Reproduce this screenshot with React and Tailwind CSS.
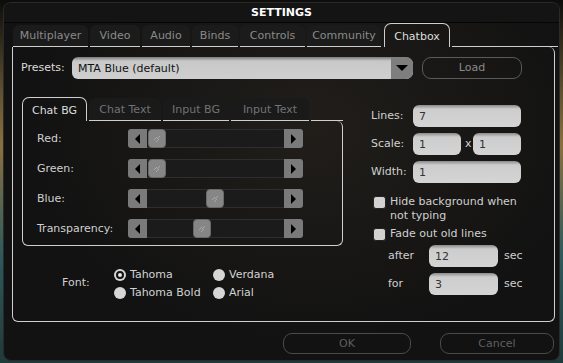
import React from "react";

const tabs = [
  ["Multiplayer", 75],
  ["Video", 50],
  ["Audio", 48],
  ["Binds", 46],
  ["Controls", 65],
  ["Community", 74],
];

const subTabs = [
  ["Chat Text", 72],
  ["Input BG", 66],
  ["Input Text", 78],
];

const sliders = [
  ["Red:", 1],
  ["Green:", 1],
  ["Blue:", 59],
  ["Transparency:", 46],
];

function Slider({ pos }) {
  return (
    <div className="relative flex h-[19px] w-[175px] items-stretch">
      <div className="flex w-[19px] items-center justify-center rounded-l-[3px] bg-[#7a7a7a]">
        <div className="h-0 w-0 border-y-[5px] border-r-[5px] border-y-transparent border-r-black" />
      </div>
      <div className="flex-1 border-y border-[#2e2e2e] bg-[#1b1b1b]" />
      <div className="flex w-[19px] items-center justify-center rounded-r-[3px] bg-[#7a7a7a]">
        <div className="h-0 w-0 border-y-[5px] border-l-[5px] border-y-transparent border-l-black" />
      </div>
      <div
        className="absolute top-[0px] flex h-[19px] w-[18px] items-center justify-center rounded-[4px] border border-[#6a6a6a] bg-[#868686]"
        style={{ left: 19 + pos }}
      >
        <svg width="9" height="9" viewBox="0 0 9 9">
          <path d="M1 6 L4 3 M3 8 L6 5 M4 5 L7 2" stroke="#a8a8a8" strokeWidth="1" />
        </svg>
      </div>
    </div>
  );
}

function Input({ value, w }) {
  return (
    <div
      className={`flex h-[22px] items-end rounded-[6px] bg-[linear-gradient(#8a8a8a,#cdcdcd_4px,#d4d4d4)] pb-[3px] pl-[6px] text-[#333] ${w}`}
    >
      {value}
    </div>
  );
}

function Radio({ checked, label }) {
  return (
    <div className="flex h-[18px] items-center gap-[4px]">
      <div className="flex h-[12px] w-[12px] items-center justify-center rounded-full bg-[#d6d6d6]">
        {checked && <div className="h-[8px] w-[8px] rounded-full border-2 border-[#111] bg-[#e8e8e8]" />}
      </div>
      <span className="text-[#d2d2d2]">{label}</span>
    </div>
  );
}

function Checkbox() {
  return <div className="mt-[1px] h-[13px] w-[13px] shrink-0 rounded-[3px] border border-[#222] bg-[#d2d2d2]" />;
}

export default function App() {
  return (
    <div className="h-[363px] w-[563px] overflow-hidden bg-[linear-gradient(180deg,#0c0c0a,#5e5030_25%,#8a7040_40%,#2f5a5c_70%,#1f3a3a)] pl-[3px] pt-[2px] font-['DejaVu_Sans',sans-serif] text-[11px] leading-[14px]">
      <div className="flex h-[359px] w-[557px] flex-col rounded-[8px] border border-[#2a2a2a] bg-[radial-gradient(ellipse_at_55%_35%,#211e1a,#121212_65%)]">
        {/* title */}
        <div className="flex h-[20px] items-center justify-center rounded-t-[8px] border-b border-[#050505] bg-[#141414] pt-[1px] text-[11px] font-bold text-white">
          SETTINGS
        </div>
        {/* tabs */}
        <div className="flex h-[24px] items-end gap-[2px] pl-[9px]">
          {tabs.map(([t, w]) => (
            <div
              key={t}
              className="flex h-[22px] items-center justify-center rounded-t-[6px] border-b border-[#cfcfcf] bg-[#1b1b1b] pt-[1px] text-[#8a8a8a]"
              style={{ width: w }}
            >
              {t}
            </div>
          ))}
          <div className="ml-[1px] flex h-[24px] w-[66px] items-center justify-center rounded-t-[7px] border border-b-0 border-[#cfcfcf] pt-[3px] text-[#dedede]">
            Chatbox
          </div>
          <div className="h-[24px] flex-1">
            <div className="mt-[23px] h-[1px] w-[106px] bg-[#cfcfcf]" />
          </div>
        </div>
        {/* main panel */}
        <div className="ml-[8px] flex h-[275px] w-[543px] flex-col rounded-b-[6px] rounded-tr-[6px] border border-t-0 border-[#cfcfcf]">
          {/* presets */}
          <div className="mt-[10px] flex h-[22px] items-center pl-[8px]">
            <span className="w-[51px] text-[#dcdcdc]">Presets:</span>
            <div className="flex h-[22px] w-[341px] overflow-hidden rounded-l-[6px] rounded-r-[7px] bg-[linear-gradient(#7a7a7a,#c8c8c8_4px,#cfcfcf)]">
              <div className="flex flex-1 items-center pl-[6px] pt-[1px] text-[#111]">MTA Blue (default)</div>
              <div className="flex w-[22px] items-center justify-center rounded-r-[7px] bg-[#7e7e7e]">
                <div className="h-0 w-0 border-x-[6px] border-t-[6px] border-x-transparent border-t-black" />
              </div>
            </div>
            <div className="ml-[9px] flex h-[22px] w-[100px] items-center justify-center rounded-[9px] border border-[#5a5a5a] text-[#8a8a8a]">
              Load
            </div>
          </div>
          {/* body */}
          <div className="mt-[18px] flex">
            {/* left column */}
            <div className="ml-[9px] flex w-[321px] flex-col">
              <div className="flex h-[24px] items-end gap-[2px]">
                <div className="flex h-[24px] w-[65px] items-center justify-center rounded-t-[7px] border border-b-0 border-[#cfcfcf] pt-[2px] text-[#dcdcdc]">
                  Chat BG
                </div>
                {subTabs.map(([t, w]) => (
                  <div
                    key={t}
                    className="flex h-[23px] items-center justify-center rounded-t-[6px] border-b border-[#cfcfcf] bg-[#1a1a1a] pt-[1px] text-[#727272]"
                    style={{ width: w }}
                  >
                    {t}
                  </div>
                ))}
                <div className="h-[24px] flex-1">
                  <div className="mt-[23px] h-[1px] w-full bg-[#cfcfcf]" />
                </div>
              </div>
              <div className="flex h-[125px] flex-col gap-[11px] rounded-b-[6px] rounded-tr-[6px] border border-t-0 border-[#cfcfcf] pl-[14px] pt-[8px]">
                {sliders.map(([l, p]) => (
                  <div key={l} className="flex h-[19px] items-center">
                    <span className="w-[91px] text-[#d0d0d0]">{l}</span>
                    <Slider pos={p} />
                  </div>
                ))}
              </div>
              {/* font */}
              <div className="mt-[20px] flex">
                <span className="ml-[40px] mt-[10px] w-[52px] text-[#d0d0d0]">Font:</span>
                <div className="flex w-[99px] flex-col">
                  <Radio checked label="Tahoma" />
                  <Radio label="Tahoma Bold" />
                </div>
                <div className="flex flex-col">
                  <Radio label="Verdana" />
                  <Radio label="Arial" />
                </div>
              </div>
            </div>
            {/* right column */}
            <div className="ml-[28px] flex flex-col pt-[8px]">
              <div className="flex items-center">
                <span className="w-[42px] text-[#d0d0d0]">Lines:</span>
                <Input value="7" w="w-[108px]" />
              </div>
              <div className="mt-[6px] flex items-center">
                <span className="w-[42px] text-[#d0d0d0]">Scale:</span>
                <Input value="1" w="w-[48px]" />
                <span className="w-[12px] pl-[4px] text-[#d0d0d0]">x</span>
                <Input value="1" w="w-[48px]" />
              </div>
              <div className="mt-[6px] flex items-center">
                <span className="w-[42px] text-[#d0d0d0]">Width:</span>
                <Input value="1" w="w-[108px]" />
              </div>
              <div className="mt-[12px] flex gap-[4px] pl-[2px] text-[#d0d0d0]">
                <Checkbox />
                <div className="leading-[14px]">
                  Hide background when
                  <br />
                  not typing
                </div>
              </div>
              <div className="mt-[4px] flex gap-[4px] pl-[2px] text-[#d0d0d0]">
                <Checkbox />
                <span>Fade out old lines</span>
              </div>
              <div className="mt-[4px] flex items-center pl-[17px] text-[#d0d0d0]">
                <span className="w-[41px]">after</span>
                <Input value="12" w="w-[69px]" />
                <span className="ml-[6px]">sec</span>
              </div>
              <div className="mt-[6px] flex items-center pl-[17px] text-[#d0d0d0]">
                <span className="w-[41px]">for</span>
                <Input value="3" w="w-[69px]" />
                <span className="ml-[6px]">sec</span>
              </div>
            </div>
          </div>
        </div>
        {/* bottom buttons */}
        <div className="mt-[11px] flex pl-[279px]">
          <div className="flex h-[21px] w-[128px] items-center justify-center rounded-[9px] border border-[#4a4a4a] text-[#5e5e5e]">
            OK
          </div>
          <div className="ml-[29px] flex h-[21px] w-[114px] items-center justify-center rounded-[9px] border border-[#4a4a4a] text-[#5e5e5e]">
            Cancel
          </div>
        </div>
      </div>
    </div>
  );
}
